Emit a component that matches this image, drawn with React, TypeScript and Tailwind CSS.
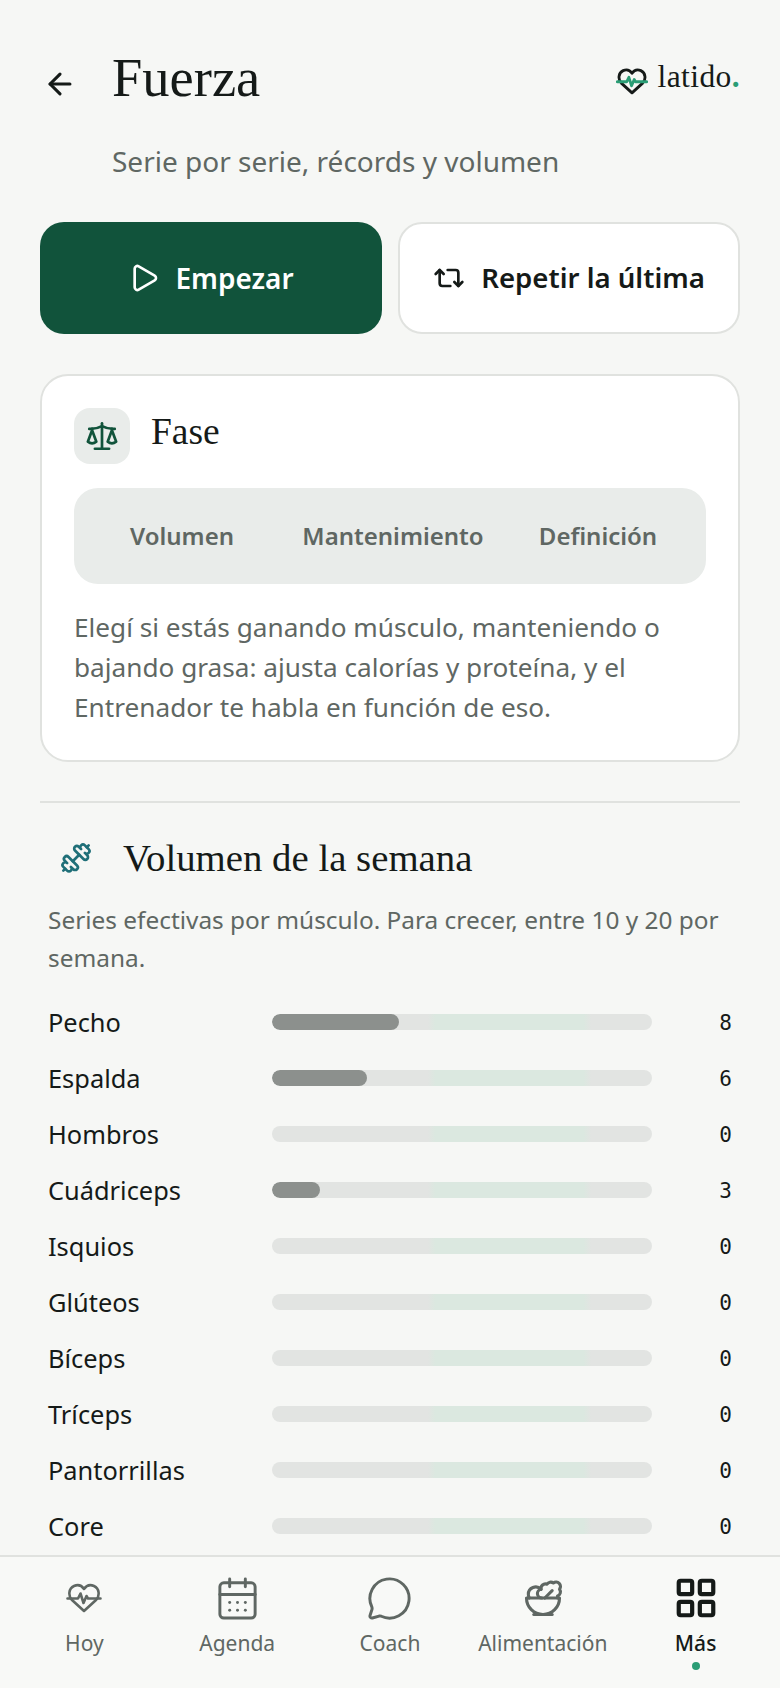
import { ArrowLeft, CalendarDays, Dumbbell, LayoutGrid, MessageCircle, Play, Repeat2, Salad, Scale } from "lucide-react";

const SANS = "font-['Noto_Sans','Open_Sans',sans-serif]";
const SERIF = "font-['Liberation_Serif',serif]";

const muscles = [
  { name: "Pecho", sets: 8 },
  { name: "Espalda", sets: 6 },
  { name: "Hombros", sets: 0 },
  { name: "Cuádriceps", sets: 3 },
  { name: "Isquios", sets: 0 },
  { name: "Glúteos", sets: 0 },
  { name: "Bíceps", sets: 0 },
  { name: "Tríceps", sets: 0 },
  { name: "Pantorrillas", sets: 0 },
  { name: "Core", sets: 0 }
];

const MAX_SETS = 24;

function HeartLine({ heart, line, size, stroke }: { heart: string; line: string; size: number; stroke: number }) {
  return (
    <svg width={size} height={(size * 30) / 36} viewBox="0 0 36 30" fill="none" strokeLinecap="round" strokeLinejoin="round" strokeWidth={stroke}>
      <path d="M18 28 6 17C2 13 2.5 5.5 8 3c4.5-2 8 0 10 3 2-3 5.500-5 10-3 5.500 2.500 6 10 2 14Z" stroke={heart} />
      <path d="M1.500 15.500H12l2.500-5 3 9.500 3-7 1.500 2.500h12.500" stroke={line} />
    </svg>
  );
}

function Logo() {
  return (
    <div className="flex items-center gap-[10px]">
      <div className="mt-[5px]">
        <HeartLine heart="#151a18" line="#2a9d75" size={32} stroke={3.2} />
      </div>
      <span className={`${SERIF} -mt-[4px] text-[31.500px] leading-none tracking-[0.4px] text-[#151a18]`}>
        latido<span className="font-bold text-[#2a9d75]">.</span>
      </span>
    </div>
  );
}

function MuscleRow({ name, sets }: { name: string; sets: number }) {
  return (
    <div className="flex h-14 items-center">
      <span className="w-[224px] text-[25.4px] text-[#151a18]">{name}</span>
      <div className="h-4 w-[380px] overflow-hidden rounded-full bg-[linear-gradient(90deg,#e2e4e2_41%,#dbe8e0_43%,#dbe8e0_82%,#e2e4e2_84%)]">
        <div className="h-full rounded-full bg-[#8c908d]" style={{ width: `${(sets / MAX_SETS) * 100}%` }} />
      </div>
      <span className="mt-[3px] ml-auto font-['DejaVu_Sans_Mono',monospace] text-[21px] text-[#151a18]">{sets}</span>
    </div>
  );
}

function NavItem({ label, active, children }: { label: string; active?: boolean; children: React.ReactNode }) {
  return (
    <div className="relative flex flex-col items-center">
      <div className={`flex h-10 items-center ${active ? "text-[#151a18]" : "text-[#5f6763]"}`}>{children}</div>
      <span className={`mt-[9px] text-[21px] leading-[32px] ${active ? "font-medium text-[#151a18]" : "text-[#5f6763]"}`}>{label}</span>
      {active && <span className="mt-[3px] h-2 w-2 rounded-full bg-[#2a9d75]" />}
    </div>
  );
}

export default function App() {
  return (
    <div className={`${SANS} flex h-[1688px] w-[780px] flex-col overflow-hidden bg-[#f6f7f5]`}>
      <main className="min-h-0 flex-1 overflow-hidden px-10 pt-[44px]">
        <header className="flex items-start">
          <ArrowLeft size={34} strokeWidth={2.2} className="mt-[23px] mr-[35px] ml-[3px] text-[#151a18]" />
          <div className="flex-1">
            <h1 className={`${SERIF} text-[54.500px] leading-[68px] text-[#151a18]`}>Fuerza</h1>
            <p className="mt-[29px] text-[28px] leading-[40px] text-[#5f6763]">Serie por serie, récords y volumen</p>
          </div>
          <div className="mt-[19px]">
            <Logo />
          </div>
        </header>

        <div className="mt-[41px] grid grid-cols-2 gap-4">
          <button className="flex h-[112px] items-center justify-center gap-[15px] rounded-[24px] bg-[#11533b] text-[28px] font-semibold text-white">
            <Play size={32} strokeWidth={2} />
            Empezar
          </button>
          <button className="flex h-[112px] items-center justify-center gap-[16px] rounded-[24px] border-2 border-[#e0e2df] bg-white text-[27.600px] font-semibold text-[#151a18]">
            <Repeat2 size={32} strokeWidth={2} />
            Repetir la última
          </button>
        </div>

        <section className="mt-10 rounded-[28px] border-2 border-[#e0e2df] bg-white px-8 pt-8 pb-[33px]">
          <div className="flex items-start gap-[21px]">
            <div className="flex h-14 w-14 items-center justify-center rounded-2xl bg-[#e9ecea]">
              <Scale size={34} strokeWidth={1.9} className="text-[#11533b]" />
            </div>
            <h2 className={`${SERIF} text-[37.500px] leading-[48px] text-[#151a18]`}>Fase</h2>
          </div>
          <div className="mt-6 grid h-[96px] grid-cols-[216px_206px_204px] items-center rounded-[24px] bg-[#e9ecea] text-center text-[24px] font-semibold text-[#5f6763]">
            <span>Volumen</span>
            <span>Mantenimiento</span>
            <span>Definición</span>
          </div>
          <p className="mt-[23px] text-[26.200px] leading-[40px] text-[#5f6763]">
            Elegí si estás ganando músculo, manteniendo o bajando grasa: ajusta calorías y proteína, y el Entrenador te habla en función de eso.
          </p>
        </section>

        <hr className="mt-[39px] border-t-2 border-[#e0e2df]" />

        <section className="px-2 pt-[32px]">
          <div className="flex items-center gap-[31px] pl-[12px]">
            <Dumbbell size={32} strokeWidth={2} className="text-[#1f6f78]" />
            <h2 className={`${SERIF} text-[38.800px] leading-[46px] text-[#151a18]`}>Volumen de la semana</h2>
          </div>
          <p className="mt-[20px] text-[24.400px] leading-[38px] text-[#5f6763]">
            Series efectivas por músculo. Para crecer, entre 10 y 20 por semana.
          </p>
          <div className="mt-[17px]">
            {muscles.map((m) => (
              <MuscleRow key={m.name} name={m.name} sets={m.sets} />
            ))}
          </div>
        </section>
      </main>

      <nav className="grid h-[133px] shrink-0 grid-cols-5 border-t-2 border-[#e0e2df] bg-[#f8f9f7] px-2 pt-[21px]">
        <NavItem label="Hoy">
          <HeartLine heart="currentColor" line="currentColor" size={36} stroke={2.6} />
        </NavItem>
        <NavItem label="Agenda">
          <CalendarDays size={47} strokeWidth={1.5} />
        </NavItem>
        <NavItem label="Coach">
          <MessageCircle size={47} strokeWidth={1.5} />
        </NavItem>
        <NavItem label="Alimentación">
          <Salad size={44} strokeWidth={1.7} />
        </NavItem>
        <NavItem label="Más" active>
          <LayoutGrid size={46} strokeWidth={2.2} />
        </NavItem>
      </nav>
    </div>
  );
}
